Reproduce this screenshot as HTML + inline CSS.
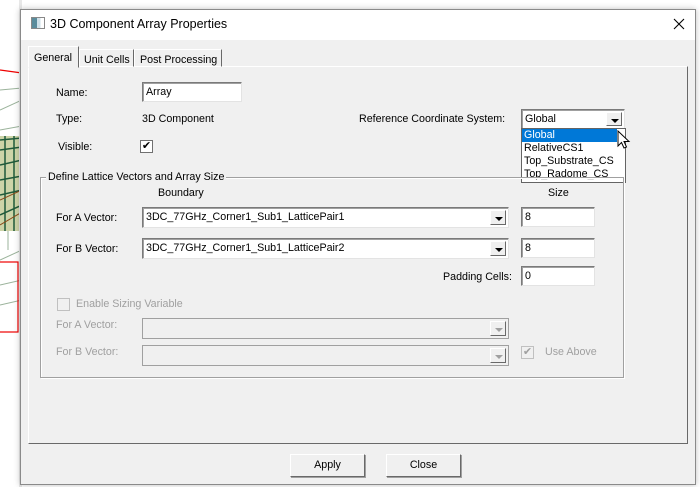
<!DOCTYPE html><html><head><style>
*{box-sizing:border-box;margin:0;padding:0}
body{width:700px;height:487px;background:#fff;position:relative;overflow:hidden;font-family:"Liberation Sans",sans-serif;font-size:10.7px;color:#000}
.a{position:absolute}
.t{position:absolute;white-space:nowrap;line-height:14px}
.in{position:absolute;background:#fff;border:1px solid #7a7a7a;border-right-color:#e3e3e3;border-bottom-color:#e3e3e3;box-shadow:inset 1px 1px 0 #a0a0a0;padding:2px 3px;line-height:14px;white-space:nowrap}
.dis{background:#f0f0f0;border-color:#a0a0a0;box-shadow:none}
.btn{position:absolute;width:16px;right:2px;top:2px;bottom:2px;background:#f0f0f0;border:1px solid;border-color:#fff #696969 #696969 #fff}
.btn:after{content:"";position:absolute;left:4px;top:6px;border-left:4px solid transparent;border-right:4px solid transparent;border-top:4px solid #000}
.btn.g:after{border-top-color:#a0a0a0}
.g{color:#a0a0a0}
.cb{position:absolute;width:13px;height:13px;border:1px solid #707070;background:#fff;font-size:11px;line-height:11px;text-align:center}
</style></head><body>
<svg class="a" style="left:0;top:0" width="22" height="487">
<path d="M0 70 L22 73" stroke="#e00" stroke-width="1.3" fill="none"/>
<path d="M0 90 L22 88 M0 110 L22 100 M0 130 L22 126 M8 140 L8 250 M0 260 L22 250 M0 285 L22 280 M0 305 L22 300" stroke="#9bb39b" fill="none"/>
<rect x="0" y="136" width="22" height="95" fill="#cdd4a8"/>
<path d="M0 140 L22 138 M0 150 L22 147 M0 165 L22 160 M0 180 L22 176 M0 195 L22 190 M0 215 L22 205 M5 136 L5 231 M14 136 L14 231" stroke="#1f5a3a" stroke-width="1.5" fill="none"/>
<path d="M0 200 L22 190 M0 225 L22 212" stroke="#8a4a1a" fill="none"/>
<rect x="-5" y="262" width="23" height="70" fill="none" stroke="#e00" stroke-width="1.2"/>
<rect x="19" y="0" width="3" height="487" fill="#e8e8e8"/>
</svg>
<div class="a" style="left:20px;top:9px;width:676px;height:476px;background:#f0f0f0;border:1px solid #8a8a8a;box-shadow:0 0 6px rgba(0,0,0,.25)"></div>
<div class="a" style="left:21px;top:10px;width:674px;height:30px;background:#fff"></div>
<div class="a" style="left:31px;top:17px;width:14px;height:12px;border:1px solid #888;background:linear-gradient(90deg,#5a8c9c 0 40%,#cfe0e8 40% 70%,#fff 70%)"></div>
<div class="t" style="left:50px;top:17px;font-size:12.5px">3D Component Array Properties</div>
<svg class="a" style="left:673px;top:18px" width="12" height="12"><path d="M1 1L11 11M11 1L1 11" stroke="#000" stroke-width="1.1"/></svg>
<div class="a" style="left:28px;top:66px;width:660px;height:378px;border:1px solid;border-color:#fff #696969 #696969 #fff;background:#f0f0f0"></div>
<div class="a" style="left:28px;top:46px;width:51px;height:22px;border:1px solid;border-color:#fff #696969 #f0f0f0 #fff;background:#f0f0f0"></div>
<div class="t" style="left:34px;top:51px">General</div>
<div class="a" style="left:79px;top:49px;width:55px;height:18px;border:1px solid;border-color:#fff #696969 transparent #fff"></div>
<div class="t" style="left:84px;top:53px">Unit Cells</div>
<div class="a" style="left:134px;top:49px;width:88px;height:18px;border:1px solid;border-color:#fff #696969 transparent #fff"></div>
<div class="t" style="left:140px;top:53px">Post Processing</div>

<div class="t" style="left:56px;top:86px">Name:</div>
<div class="in" style="left:142px;top:82px;width:100px;height:20px">Array</div>
<div class="t" style="left:56px;top:112px">Type:</div>
<div class="t" style="left:142px;top:112px">3D Component</div>
<div class="t" style="left:58px;top:140px">Visible:</div>
<div class="cb" style="left:140px;top:140px">✔</div>
<div class="t" style="left:359px;top:112px">Reference Coordinate System:</div>
<div class="in" style="left:521px;top:109px;width:104px;height:20px">Global<div class="btn"></div></div>
<div class="a" style="left:521px;top:128px;width:105px;height:55px;background:#fff;border:1px solid #646464"></div>
<div class="a" style="left:522px;top:129px;width:95px;height:13px;background:#0078d7"></div>
<div class="t" style="left:524px;top:129px;color:#fff;line-height:13px">Global</div>
<div class="t" style="left:524px;top:142px;line-height:13px">RelativeCS1</div>
<div class="t" style="left:524px;top:155px;line-height:13px">Top_Substrate_CS</div>
<div class="t" style="left:524px;top:168px;line-height:13px">Top_Radome_CS</div>
<svg class="a" style="left:617px;top:130px" width="14" height="22"><path d="M1 1 L1 16 L4.5 12.5 L7 18 L9.5 17 L7 11.5 L12 11.5 Z" fill="#fff" stroke="#000"/></svg>

<div class="a" style="left:40px;top:177px;width:584px;height:201px;border:1px solid #a0a0a0;box-shadow:1px 1px 0 #fff inset,1px 1px 0 #fff"></div>
<div class="t" style="left:46px;top:170px;background:#f0f0f0;padding:0 2px">Define Lattice Vectors and Array Size</div>
<div class="t" style="left:158px;top:186px">Boundary</div>
<div class="t" style="left:548px;top:186px">Size</div>
<div class="t" style="left:56px;top:211px">For A Vector:</div>
<div class="in" style="left:142px;top:207px;width:367px;height:21px">3DC_77GHz_Corner1_Sub1_LatticePair1<div class="btn"></div></div>
<div class="in" style="left:521px;top:207px;width:74px;height:20px">8</div>
<div class="t" style="left:56px;top:242px">For B Vector:</div>
<div class="in" style="left:142px;top:238px;width:367px;height:21px">3DC_77GHz_Corner1_Sub1_LatticePair2<div class="btn"></div></div>
<div class="in" style="left:521px;top:238px;width:74px;height:20px">8</div>
<div class="t" style="left:443px;top:270px">Padding Cells:</div>
<div class="in" style="left:521px;top:266px;width:74px;height:20px">0</div>
<div class="cb" style="left:57px;top:298px;border-color:#c0c0c0;background:#f0f0f0"></div>
<div class="t g" style="left:76px;top:297px">Enable Sizing Variable</div>
<div class="t g" style="left:56px;top:318px">For A Vector:</div>
<div class="in dis" style="left:142px;top:318px;width:367px;height:21px"><div class="btn g"></div></div>
<div class="t g" style="left:56px;top:345px">For B Vector:</div>
<div class="in dis" style="left:142px;top:345px;width:367px;height:21px"><div class="btn g"></div></div>
<div class="cb g" style="left:521px;top:346px;border-color:#c0c0c0;background:#f0f0f0">✔</div>
<div class="t g" style="left:545px;top:345px">Use Above</div>

<div class="a" style="left:290px;top:454px;width:75px;height:23px;border:1px solid;border-color:#fff #696969 #696969 #fff;box-shadow:1px 1px 0 #a0a0a0;text-align:center;line-height:21px">Apply</div>
<div class="a" style="left:386px;top:454px;width:75px;height:23px;border:1px solid;border-color:#fff #696969 #696969 #fff;box-shadow:1px 1px 0 #a0a0a0;text-align:center;line-height:21px">Close</div>
</body></html>
